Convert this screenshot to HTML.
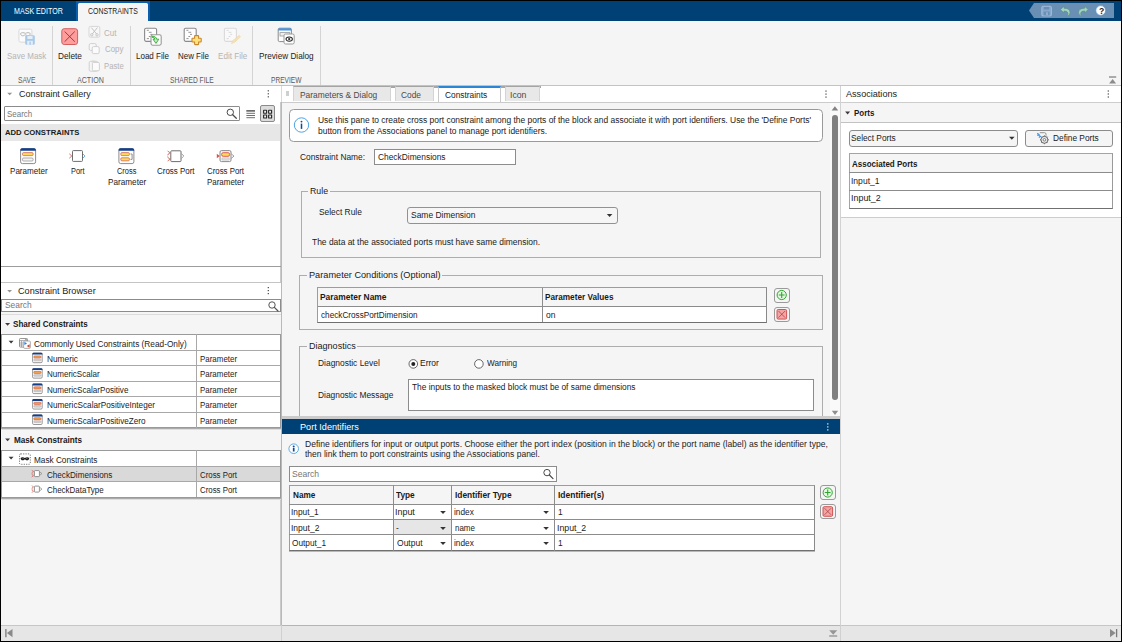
<!DOCTYPE html>
<html><head><meta charset="utf-8"><title>Mask Editor</title>
<style>
html,body{margin:0;padding:0;}
body{width:1122px;height:642px;overflow:hidden;background:#000;font-family:"Liberation Sans",sans-serif;}
#app{position:absolute;left:0;top:0;width:1122px;height:642px;overflow:hidden;background:#000;}
#app div,#app svg{position:absolute;box-sizing:border-box;}
#app .t{white-space:pre;line-height:12px;height:12px;transform-origin:0 0;}
</style></head><body><div id="app">
<div style="left:1px;top:1px;width:1120px;height:640px;background:#f5f5f5;"></div>
<div style="left:1px;top:1px;width:1120px;height:20px;background:#004175;"></div>
<div style="left:75.6px;top:1px;width:74.4px;height:20px;background:#0a5eae;"></div>
<div style="left:78.2px;top:3.4px;width:69.7px;height:17.6px;background:#f5f5f5;border-radius:1.5px 1.5px 0 0;"></div>
<div class="t" style="left:14px;top:6px;font-size:8.2px;color:#fff;transform:scaleX(0.867);">MASK EDITOR</div>
<div class="t" style="left:88px;top:6px;font-size:8.2px;color:#222;transform:scaleX(0.848);">CONSTRAINTS</div>
<svg style="left:1029px;top:3px" width="87" height="17" viewBox="0 0 87 17"><path d="M0 7.5 L5 0 H85 V15 H5 Z" fill="#6a8fb5"/></svg>
<div style="left:52px;top:26px;width:1px;height:59px;background:#d4d4d4;"></div>
<div style="left:130px;top:26px;width:1px;height:59px;background:#d4d4d4;"></div>
<div style="left:252px;top:26px;width:1px;height:59px;background:#d4d4d4;"></div>
<div style="left:320px;top:26px;width:1px;height:59px;background:#d4d4d4;"></div>
<div style="left:1px;top:85px;width:1120px;height:1px;background:#c3c3c3;"></div>
<div class="t" style="left:7px;top:50px;font-size:8.4px;color:#b4b4b4;transform:scaleX(0.948);">Save Mask</div>
<div class="t" style="left:58px;top:50px;font-size:8.4px;color:#222;transform:scaleX(0.988);">Delete</div>
<div class="t" style="left:104px;top:27px;font-size:8.4px;color:#b4b4b4;transform:scaleX(0.954);">Cut</div>
<div class="t" style="left:105px;top:43px;font-size:8.4px;color:#b4b4b4;transform:scaleX(0.943);">Copy</div>
<div class="t" style="left:104px;top:60px;font-size:8.4px;color:#b4b4b4;transform:scaleX(0.919);">Paste</div>
<div class="t" style="left:136px;top:50px;font-size:8.4px;color:#222;transform:scaleX(0.957);">Load File</div>
<div class="t" style="left:178px;top:50px;font-size:8.4px;color:#222;transform:scaleX(0.949);">New File</div>
<div class="t" style="left:218px;top:50px;font-size:8.4px;color:#b4b4b4;transform:scaleX(0.967);">Edit File</div>
<div class="t" style="left:259px;top:50px;font-size:8.4px;color:#222;transform:scaleX(0.979);">Preview Dialog</div>
<div class="t" style="left:18px;top:75px;font-size:8.2px;color:#5a5a5a;transform:scaleX(0.824);">SAVE</div>
<div class="t" style="left:77px;top:75px;font-size:8.2px;color:#5a5a5a;transform:scaleX(0.868);">ACTION</div>
<div class="t" style="left:170px;top:75px;font-size:8.2px;color:#5a5a5a;transform:scaleX(0.813);">SHARED FILE</div>
<div class="t" style="left:271px;top:75px;font-size:8.2px;color:#5a5a5a;transform:scaleX(0.808);">PREVIEW</div>
<div style="left:1px;top:86px;width:280px;height:16px;background:#fff;"></div>
<div style="left:1px;top:101.5px;width:280px;height:1px;background:#c6c6c6;"></div>
<svg style="left:7px;top:92px" width="7" height="4" viewBox="-0.2 -0.7 7 4"><path d="M0 0 H5 L2.5 2.5 Z" fill="#959595"/></svg>
<div class="t" style="left:19px;top:88px;font-size:9.1px;color:#222;transform:scaleX(0.986);">Constraint Gallery</div>
<svg style="left:267px;top:90px" width="3" height="9" viewBox="-0.3 -0.2 3 9"><rect x="0.4" y="0" width="1.2" height="1.2" fill="#444"/><rect x="0.4" y="3" width="1.2" height="1.2" fill="#444"/><rect x="0.4" y="6" width="1.2" height="1.2" fill="#444"/></svg>
<div style="left:1px;top:102px;width:280px;height:180px;background:#fff;"></div>
<div style="left:4px;top:105.8px;width:236px;height:15.6px;background:#fff;border:1px solid #8c8c8c;border-radius:1px;"></div>
<div class="t" style="left:7px;top:108px;font-size:8.4px;color:#767676;transform:scaleX(0.950);">Search</div>
<svg style="left:226px;top:108px" width="12" height="12" viewBox="-0.3 -0.3 12 12"><circle cx="4" cy="4" r="3.2" fill="none" stroke="#4a4a4a" stroke-width="1"/><path d="M6.4 6.4 L10 10" stroke="#4a4a4a" stroke-width="1.25" stroke-linecap="round"/></svg>
<svg style="left:246px;top:110px" width="11" height="10" viewBox="0 0 11 10"><path d="M0.4 1H9M0.4 3.3H9M0.4 5.5H9M0.4 7.7H9" stroke="#555" stroke-width="0.85"/><path d="M0.4 0.8H9" stroke="#555" stroke-width="1.1"/></svg>
<div style="left:260.2px;top:105.2px;width:15px;height:16.8px;background:#dcdcdc;border:1px solid #8a8a8a;border-radius:2px;"></div>
<svg style="left:263px;top:109px" width="11" height="11" viewBox="0 -0.6 11 11"><g fill="#f0f0f0" stroke="#2a2a2a" stroke-width="1.15"><rect x="0.6" y="0.6" width="3" height="3" rx="0.3"/><rect x="5.6" y="0.6" width="3" height="3" rx="0.3"/><rect x="0.6" y="5.4" width="3" height="3" rx="0.3"/><rect x="5.6" y="5.4" width="3" height="3" rx="0.3"/></g></svg>
<div style="left:1px;top:124px;width:280px;height:16.5px;background:#e7e7e7;"></div>
<div class="t" style="left:5px;top:127px;font-size:7.7px;color:#1a1a1a;font-weight:700;">ADD CONSTRAINTS</div>
<div class="t" style="left:10px;top:165px;font-size:8.4px;color:#222;transform:scaleX(0.963);">Parameter</div>
<div class="t" style="left:71px;top:165px;font-size:8.4px;color:#222;transform:scaleX(0.884);">Port</div>
<div class="t" style="left:117px;top:165px;font-size:8.4px;color:#222;transform:scaleX(0.884);">Cross</div>
<div class="t" style="left:108px;top:176px;font-size:8.4px;color:#222;transform:scaleX(0.978);">Parameter</div>
<div class="t" style="left:157px;top:165px;font-size:8.4px;color:#222;transform:scaleX(0.950);">Cross Port</div>
<div class="t" style="left:207px;top:165px;font-size:8.4px;color:#222;transform:scaleX(0.936);">Cross Port</div>
<div class="t" style="left:207px;top:176px;font-size:8.4px;color:#222;transform:scaleX(0.948);">Parameter</div>
<div style="left:281px;top:86px;width:1px;height:16px;background:#d9d9d9;"></div>
<div style="left:280px;top:102px;width:1px;height:523px;background:#cacaca;"></div>
<div style="left:281px;top:102px;width:1px;height:523px;background:#b9b9b9;"></div>
<div style="left:1px;top:266px;width:280px;height:1px;background:#9c9c9c;"></div>
<div style="left:1px;top:282px;width:280px;height:1px;background:#c4c4c4;"></div>
<div style="left:1px;top:283px;width:280px;height:16px;background:#fff;"></div>
<svg style="left:7px;top:290px" width="7" height="4" viewBox="0 0 7 4"><path d="M0.2 0 H5 L2.6 2.5 Z" fill="#959595"/></svg>
<div class="t" style="left:18px;top:285px;font-size:9.1px;color:#222;transform:scaleX(1.005);">Constraint Browser</div>
<svg style="left:267px;top:287px" width="3" height="9" viewBox="-0.3 0 3 9"><rect x="0.4" y="0" width="1.2" height="1.2" fill="#444"/><rect x="0.4" y="3" width="1.2" height="1.2" fill="#444"/><rect x="0.4" y="6" width="1.2" height="1.2" fill="#444"/></svg>
<div style="left:1px;top:299px;width:280px;height:12.6px;background:#fff;border:1px solid #8c8c8c;"></div>
<div class="t" style="left:5px;top:299px;font-size:8.4px;color:#767676;">Search</div>
<svg style="left:268px;top:301px" width="12" height="12" viewBox="0 0 12 12"><circle cx="4" cy="4" r="3.2" fill="none" stroke="#555" stroke-width="1"/><path d="M6.4 6.4 L10 10" stroke="#555" stroke-width="1.25" stroke-linecap="round"/></svg>
<div style="left:1px;top:312px;width:280px;height:22px;background:#f5f5f5;"></div>
<div style="left:1px;top:314px;width:280px;height:1px;background:#dcdcdc;"></div>
<svg style="left:5px;top:322px" width="7" height="5" viewBox="0 -0.6 7 5"><path d="M0.1 0.3 H5.1 L2.6 3.1 Z" fill="#3a3a3a"/></svg>
<div class="t" style="left:13px;top:318px;font-size:8.4px;color:#1a1a1a;font-weight:700;transform:scaleX(0.966);">Shared Constraints</div>
<div style="left:1px;top:334.3px;width:280px;height:94px;background:#fff;"></div>
<svg style="left:8px;top:340px" width="7" height="5" viewBox="-0.5 -0.5 7 5"><path d="M0.1 0.3 H5.1 L2.6 3.1 Z" fill="#3a3a3a"/></svg>
<div class="t" style="left:34px;top:338px;font-size:8.4px;color:#222;transform:scaleX(0.988);">Commonly Used Constraints (Read-Only)</div>
<div class="t" style="left:47px;top:353px;font-size:8.4px;color:#222;transform:scaleX(0.992);">Numeric</div>
<div class="t" style="left:200px;top:353px;font-size:8.4px;color:#222;transform:scaleX(0.948);">Parameter</div>
<div class="t" style="left:47px;top:368px;font-size:8.4px;color:#222;transform:scaleX(0.958);">NumericScalar</div>
<div class="t" style="left:200px;top:368px;font-size:8.4px;color:#222;transform:scaleX(0.948);">Parameter</div>
<div class="t" style="left:47px;top:384px;font-size:8.4px;color:#222;transform:scaleX(0.966);">NumericScalarPositive</div>
<div class="t" style="left:200px;top:384px;font-size:8.4px;color:#222;transform:scaleX(0.948);">Parameter</div>
<div class="t" style="left:47px;top:399px;font-size:8.4px;color:#222;transform:scaleX(0.979);">NumericScalarPositiveInteger</div>
<div class="t" style="left:200px;top:399px;font-size:8.4px;color:#222;transform:scaleX(0.948);">Parameter</div>
<div class="t" style="left:47px;top:415px;font-size:8.4px;color:#222;transform:scaleX(0.970);">NumericScalarPositiveZero</div>
<div class="t" style="left:200px;top:415px;font-size:8.4px;color:#222;transform:scaleX(0.948);">Parameter</div>
<div style="left:1px;top:334px;width:280px;height:1px;background:#9a9a9a;"></div>
<div style="left:1px;top:350px;width:280px;height:1px;background:#a8a8a8;"></div>
<div style="left:1px;top:365px;width:280px;height:1px;background:#a8a8a8;"></div>
<div style="left:1px;top:381px;width:280px;height:1px;background:#a8a8a8;"></div>
<div style="left:1px;top:396px;width:280px;height:1px;background:#a8a8a8;"></div>
<div style="left:1px;top:412px;width:280px;height:1px;background:#a8a8a8;"></div>
<div style="left:1px;top:427px;width:280px;height:1px;background:#9a9a9a;"></div>
<div style="left:1px;top:428px;width:280px;height:1px;background:#ababab;"></div>
<div style="left:1px;top:429px;width:280px;height:1px;background:#dedede;"></div>
<div style="left:196px;top:334.3px;width:1px;height:94px;background:#a8a8a8;"></div>
<div style="left:1px;top:334.3px;width:1px;height:94px;background:#9a9a9a;"></div>
<div style="left:280px;top:334.3px;width:1px;height:94px;background:#9a9a9a;"></div>
<div style="left:1px;top:430px;width:280px;height:21px;background:#f5f5f5;"></div>
<svg style="left:5px;top:438px" width="7" height="5" viewBox="0 -0.2 7 5"><path d="M0.1 0.3 H5.1 L2.6 3.1 Z" fill="#3a3a3a"/></svg>
<div class="t" style="left:14px;top:434px;font-size:8.4px;color:#1a1a1a;font-weight:700;transform:scaleX(0.974);">Mask Constraints</div>
<div style="left:1px;top:450.3px;width:280px;height:47px;background:#fff;"></div>
<svg style="left:8px;top:456px" width="7" height="5" viewBox="-0.5 -0.5 7 5"><path d="M0.1 0.3 H5.1 L2.6 3.1 Z" fill="#3a3a3a"/></svg>
<div class="t" style="left:34px;top:454px;font-size:8.4px;color:#222;transform:scaleX(0.981);">Mask Constraints</div>
<div style="left:2px;top:467px;width:278px;height:15px;background:#d9d9d9;"></div>
<div class="t" style="left:47px;top:469px;font-size:8.4px;color:#222;transform:scaleX(0.968);">CheckDimensions</div>
<div class="t" style="left:200px;top:469px;font-size:8.4px;color:#222;transform:scaleX(0.936);">Cross Port</div>
<div class="t" style="left:47px;top:484px;font-size:8.4px;color:#222;transform:scaleX(0.951);">CheckDataType</div>
<div class="t" style="left:200px;top:484px;font-size:8.4px;color:#222;transform:scaleX(0.936);">Cross Port</div>
<div style="left:1px;top:450px;width:280px;height:1px;background:#9a9a9a;"></div>
<div style="left:1px;top:466px;width:280px;height:1px;background:#a8a8a8;"></div>
<div style="left:1px;top:481px;width:280px;height:1px;background:#a8a8a8;"></div>
<div style="left:1px;top:497px;width:280px;height:1px;background:#9a9a9a;"></div>
<div style="left:1px;top:498px;width:280px;height:1px;background:#ababab;"></div>
<div style="left:1px;top:499px;width:280px;height:1px;background:#dedede;"></div>
<div style="left:196px;top:450.3px;width:1px;height:47px;background:#a8a8a8;"></div>
<div style="left:1px;top:450.3px;width:1px;height:47px;background:#9a9a9a;"></div>
<div style="left:280px;top:450.3px;width:1px;height:47px;background:#9a9a9a;"></div>
<div style="left:1px;top:625px;width:1120px;height:16px;background:#e6e6e6;"></div>
<div style="left:1px;top:625px;width:1120px;height:1px;background:#c6c6c6;"></div>
<svg style="left:5px;top:629px" width="9" height="10" viewBox="-0.3 0 9 10"><path d="M0.6 0 V8.2" stroke="#7a7a7a" stroke-width="1.3"/><path d="M7.2 0 V8.2 L1.6 4.1 Z" fill="#8a8a8a"/></svg>
<svg style="left:1109px;top:629px" width="9" height="10" viewBox="-0.6 0 9 10"><path d="M7 0 V8.2" stroke="#7a7a7a" stroke-width="1.3"/><path d="M0.4 0 V8.2 L6 4.1 Z" fill="#8a8a8a"/></svg>
<div style="left:282px;top:86px;width:558px;height:16px;background:#fff;"></div>
<div style="left:286.2px;top:91.2px;width:2.5px;height:4.5px;background:#cfcfcf;"></div>
<div style="left:282px;top:101.5px;width:558px;height:1px;background:#cbcbcb;"></div>
<div style="left:293px;top:86px;width:146px;height:1.6px;background:#a6a6a6;"></div>
<div style="left:501px;top:86px;width:39.6px;height:1.6px;background:#a6a6a6;"></div>
<div style="left:293px;top:86px;width:98px;height:15.4px;background:#e8e8e8;border-top:1.6px solid #a4a4a4;border-left:1px solid #d4d4d4;border-right:1px solid #d4d4d4;"></div>
<div class="t" style="left:300px;top:89px;font-size:8.4px;color:#4a4a4a;">Parameters &amp; Dialog</div>
<div style="left:395px;top:86px;width:39.39999999999998px;height:15.4px;background:#e8e8e8;border-top:1.6px solid #a4a4a4;border-left:1px solid #d4d4d4;border-right:1px solid #d4d4d4;"></div>
<div class="t" style="left:401px;top:89px;font-size:8.4px;color:#4a4a4a;">Code</div>
<div style="left:438.3px;top:86px;width:62.80000000000001px;height:16.2px;background:#fff;border-top:2px solid #2a86d6;border-left:1px solid #c9c9c9;border-right:1px solid #c9c9c9;"></div>
<div class="t" style="left:445px;top:89px;font-size:8.4px;color:#1a1a1a;transform:scaleX(0.996);">Constraints</div>
<div style="left:504.6px;top:86px;width:35.89999999999998px;height:15.4px;background:#e8e8e8;border-top:1.6px solid #a4a4a4;border-left:1px solid #d4d4d4;border-right:1px solid #d4d4d4;"></div>
<div class="t" style="left:510px;top:89px;font-size:8.4px;color:#4a4a4a;transform:scaleX(1.040);">Icon</div>
<svg style="left:825px;top:90px" width="3" height="9" viewBox="0 -0.5 3 9"><rect x="0.4" y="0" width="1.2" height="1.2" fill="#444"/><rect x="0.4" y="3" width="1.2" height="1.2" fill="#444"/><rect x="0.4" y="6" width="1.2" height="1.2" fill="#444"/></svg>
<div style="left:288.5px;top:109px;width:534.5px;height:32.5px;background:#fff;border:1px solid #9a9a9a;border-radius:4.5px;"></div>
<svg style="left:293px;top:116px" width="18" height="18" viewBox="-0.2 -0.7 18 18"><circle cx="8.3" cy="8.3" r="7.2" fill="#fff" stroke="#4da3e6" stroke-width="1"/><circle cx="8.3" cy="4.9" r="0.95" fill="#0b4a8e"/><rect x="7.55" y="6.9" width="1.5" height="5.3" fill="#0b4a8e"/></svg>
<div class="t" style="left:318px;top:114px;font-size:8.4px;color:#1a1a1a;transform:scaleX(1.007);">Use this pane to create cross port constraint among the ports of the block and associate it with port identifiers. Use the &#x27;Define Ports&#x27;</div>
<div class="t" style="left:318px;top:125px;font-size:8.4px;color:#1a1a1a;transform:scaleX(1.008);">button from the Associations panel to manage port identifiers.</div>
<div class="t" style="left:300px;top:151px;font-size:8.4px;color:#1a1a1a;transform:scaleX(0.998);">Constraint Name:</div>
<div style="left:374px;top:149px;width:141.5px;height:15.5px;background:#fff;border:1px solid #8c8c8c;"></div>
<div class="t" style="left:378px;top:151px;font-size:8.4px;color:#1a1a1a;">CheckDimensions</div>
<div style="left:300.7px;top:191px;width:520.7px;height:66.5px;border:1px solid #adadad;"></div>
<div style="left:308px;top:191px;width:22.19999999999999px;height:1px;background:#f5f5f5;"></div>
<div class="t" style="left:310px;top:185px;font-size:9.1px;color:#1a1a1a;transform:scaleX(0.963);">Rule</div>
<div class="t" style="left:319px;top:206px;font-size:8.4px;color:#1a1a1a;">Select Rule</div>
<div style="left:407px;top:207px;width:211px;height:16.5px;background:#f6f6f6;border:1px solid #929292;border-radius:3px;"></div>
<div class="t" style="left:411px;top:209px;font-size:8.4px;color:#1a1a1a;transform:scaleX(1.009);">Same Dimension</div>
<svg style="left:606px;top:213px" width="7" height="5" viewBox="-0.8 -0.9 7 5"><path d="M0 0.2 H5.6 L2.8 3.2 Z" fill="#333"/></svg>
<div class="t" style="left:312px;top:236px;font-size:8.4px;color:#1a1a1a;transform:scaleX(1.008);">The data at the associated ports must have same dimension.</div>
<div style="left:299px;top:275px;width:524px;height:54.5px;border:1px solid #adadad;"></div>
<div style="left:306.7px;top:275px;width:135.10000000000002px;height:1px;background:#f5f5f5;"></div>
<div class="t" style="left:309px;top:269px;font-size:9.1px;color:#1a1a1a;transform:scaleX(1.009);">Parameter Conditions (Optional)</div>
<div style="left:317.4px;top:287px;width:449.6px;height:35.5px;background:#fff;border:1px solid #8c8c8c;border-color:#9c9c9c #8a8a8a #707070 #9c9c9c;"></div>
<div style="left:318.4px;top:288px;width:447.6px;height:18px;background:#f5f5f5;"></div>
<div style="left:318px;top:306px;width:449px;height:1px;background:#8c8c8c;"></div>
<div style="left:542px;top:288px;width:1px;height:34px;background:#8c8c8c;"></div>
<div class="t" style="left:320px;top:291px;font-size:8.4px;color:#1a1a1a;font-weight:700;transform:scaleX(1.006);">Parameter Name</div>
<div class="t" style="left:545px;top:291px;font-size:8.4px;color:#1a1a1a;font-weight:700;transform:scaleX(0.980);">Parameter Values</div>
<div class="t" style="left:321px;top:309px;font-size:8.4px;color:#222;transform:scaleX(0.978);">checkCrossPortDimension</div>
<div class="t" style="left:546px;top:309px;font-size:8.4px;color:#222;transform:scaleX(1.017);">on</div>
<div style="left:774px;top:287.5px;width:15.5px;height:15px;background:#f5f5f5;border:1px solid #9a9a9a;border-radius:3px;"></div>
<svg style="left:776px;top:289px" width="12" height="12" viewBox="-0.2 -0.5 12 12"><circle cx="5.5" cy="5.5" r="4.6" fill="#e4f6e2" stroke="#2ea82e" stroke-width="1"/><path d="M5.5 2.6V8.4M2.6 5.5H8.4" stroke="#2ea82e" stroke-width="1.1"/></svg>
<div style="left:774px;top:306.8px;width:15.5px;height:15px;background:#f5f5f5;border:1px solid #9a9a9a;border-radius:3px;"></div>
<svg style="left:776px;top:309px" width="12" height="12" viewBox="-0.5 0 12 12"><rect x="0.5" y="0.5" width="9.6" height="9.6" rx="1.2" fill="#f5a3a3" stroke="#c84848" stroke-width="0.9"/><path d="M2 2L8.6 8.6M8.6 2L2 8.6" stroke="#a04040" stroke-width="0.75"/></svg>
<div style="left:299px;top:346px;width:524px;height:71.39999999999998px;border:1px solid #adadad;"></div>
<div style="left:306.7px;top:346px;width:50.80000000000001px;height:1px;background:#f5f5f5;"></div>
<div class="t" style="left:309px;top:340px;font-size:9.1px;color:#1a1a1a;transform:scaleX(0.994);">Diagnostics</div>
<div class="t" style="left:318px;top:357px;font-size:8.4px;color:#1a1a1a;transform:scaleX(1.005);">Diagnostic Level</div>
<svg style="left:408px;top:358px" width="12" height="12" viewBox="0 -0.6 12 12"><circle cx="5.3" cy="5.3" r="4.3" fill="#fff" stroke="#555" stroke-width="0.9"/><circle cx="5.3" cy="5.3" r="2" fill="#222"/></svg>
<div class="t" style="left:420px;top:357px;font-size:8.4px;color:#1a1a1a;transform:scaleX(1.012);">Error</div>
<svg style="left:473px;top:358px" width="12" height="12" viewBox="-0.6 -0.6 12 12"><circle cx="5.3" cy="5.3" r="4.3" fill="#fff" stroke="#555" stroke-width="0.9"/></svg>
<div class="t" style="left:487px;top:357px;font-size:8.4px;color:#1a1a1a;transform:scaleX(0.977);">Warning</div>
<div class="t" style="left:318px;top:389px;font-size:8.4px;color:#1a1a1a;">Diagnostic Message</div>
<div style="left:408px;top:379.3px;width:406px;height:31.4px;background:#fff;border:1px solid #8c8c8c;"></div>
<div class="t" style="left:412px;top:381px;font-size:8.4px;color:#1a1a1a;transform:scaleX(0.994);">The inputs to the masked block must be of same dimensions</div>
<div style="left:830.4px;top:102.5px;width:9.6px;height:315px;background:#fafafa;"></div>
<svg style="left:831px;top:106px" width="9" height="6" viewBox="-0.6 0 9 6"><path d="M0 4.5 L3.3 0.2 L6.6 4.5 Z" fill="#838383"/></svg>
<div style="left:832.1px;top:114.9px;width:5.8px;height:285.4px;background:#808080;border-radius:2.9px;"></div>
<svg style="left:831px;top:410px" width="9" height="6" viewBox="-0.8 -0.5 9 6"><path d="M0 0.2 L3.2 4.5 L6.4 0.2 Z" fill="#8e8e8e"/></svg>
<div style="left:282px;top:416.2px;width:558px;height:2.6px;background:#cbcbcb;"></div>
<div style="left:282px;top:418.7px;width:558px;height:207px;background:#f5f5f5;"></div>
<div style="left:282px;top:418.7px;width:558px;height:15.6px;background:#004175;"></div>
<div class="t" style="left:300px;top:421px;font-size:8.6px;color:#fff;transform:scaleX(1.062);">Port Identifiers</div>
<svg style="left:826px;top:423px" width="3" height="9" viewBox="-0.8 -0.3 3 9"><rect x="0.4" y="0" width="1.2" height="1.2" fill="#fff"/><rect x="0.4" y="3" width="1.2" height="1.2" fill="#fff"/><rect x="0.4" y="6" width="1.2" height="1.2" fill="#fff"/></svg>
<svg style="left:288px;top:443px" width="13" height="13" viewBox="0 0 13 13"><circle cx="5.7" cy="5.7" r="4.8" fill="#fff" stroke="#4da3e6" stroke-width="0.9"/><circle cx="5.7" cy="3.5" r="1" fill="#0b4a8e"/><rect x="4.85" y="5" width="1.7" height="3.5" fill="#0b4a8e"/></svg>
<div class="t" style="left:305px;top:438px;font-size:8.4px;color:#222;transform:scaleX(1.022);">Define identifiers for input or output ports. Choose either the port index (position in the block) or the port name (label) as the identifier type,</div>
<div class="t" style="left:305px;top:448px;font-size:8.4px;color:#222;transform:scaleX(1.015);">then link them to port constraints using the Associations panel.</div>
<div style="left:288.7px;top:466.2px;width:268.3px;height:15.6px;background:#fff;border:1px solid #8c8c8c;"></div>
<div class="t" style="left:292px;top:468px;font-size:8.4px;color:#767676;transform:scaleX(1.021);">Search</div>
<svg style="left:543px;top:468px" width="12" height="12" viewBox="0 -0.6 12 12"><circle cx="4" cy="4" r="3.2" fill="none" stroke="#4a4a4a" stroke-width="1"/><path d="M6.4 6.4 L10 10" stroke="#4a4a4a" stroke-width="1.25" stroke-linecap="round"/></svg>
<div style="left:289px;top:485px;width:526px;height:66px;background:#fff;border:1px solid #8c8c8c;border-color:#9c9c9c #8a8a8a #707070 #9c9c9c;"></div>
<div style="left:290px;top:486px;width:524px;height:18px;background:#f5f5f5;"></div>
<div style="left:394px;top:520px;width:57px;height:14px;background:#e6e6e6;"></div>
<div style="left:289px;top:504px;width:526px;height:1px;background:#8c8c8c;"></div>
<div style="left:289px;top:519px;width:526px;height:1px;background:#8c8c8c;"></div>
<div style="left:289px;top:534px;width:526px;height:1px;background:#8c8c8c;"></div>
<div style="left:289px;top:551px;width:526px;height:1px;background:#b8b8b8;"></div>
<div style="left:393px;top:485px;width:1px;height:66px;background:#8c8c8c;"></div>
<div style="left:451px;top:485px;width:1px;height:66px;background:#8c8c8c;"></div>
<div style="left:554px;top:485px;width:1px;height:66px;background:#8c8c8c;"></div>
<div class="t" style="left:293px;top:489px;font-size:8.4px;color:#1a1a1a;font-weight:700;transform:scaleX(0.981);">Name</div>
<div class="t" style="left:396px;top:489px;font-size:8.4px;color:#1a1a1a;font-weight:700;transform:scaleX(0.990);">Type</div>
<div class="t" style="left:455px;top:489px;font-size:8.4px;color:#1a1a1a;font-weight:700;">Identifier Type</div>
<div class="t" style="left:558px;top:489px;font-size:8.4px;color:#1a1a1a;font-weight:700;transform:scaleX(1.013);">Identifier(s)</div>
<div class="t" style="left:291px;top:506px;font-size:8.4px;color:#222;transform:scaleX(0.991);">Input_1</div>
<div class="t" style="left:395px;top:506px;font-size:8.4px;color:#222;transform:scaleX(1.064);">Input</div>
<div class="t" style="left:454px;top:506px;font-size:8.4px;color:#222;transform:scaleX(0.990);">index</div>
<div class="t" style="left:558px;top:506px;font-size:8.4px;color:#222;">1</div>
<svg style="left:440px;top:510px" width="7" height="5" viewBox="-0.2 -0.7 7 5"><path d="M0 0.2 H5.6 L2.8 3.2 Z" fill="#333"/></svg>
<svg style="left:543px;top:510px" width="7" height="5" viewBox="-0.3 -0.7 7 5"><path d="M0 0.2 H5.6 L2.8 3.2 Z" fill="#333"/></svg>
<div class="t" style="left:291px;top:522px;font-size:8.4px;color:#222;transform:scaleX(1.017);">Input_2</div>
<div class="t" style="left:396px;top:522px;font-size:8.4px;color:#222;">-</div>
<div class="t" style="left:455px;top:522px;font-size:8.4px;color:#222;transform:scaleX(0.952);">name</div>
<div class="t" style="left:557px;top:522px;font-size:8.4px;color:#222;transform:scaleX(1.045);">Input_2</div>
<svg style="left:440px;top:526px" width="7" height="5" viewBox="-0.2 -0.7 7 5"><path d="M0 0.2 H5.6 L2.8 3.2 Z" fill="#333"/></svg>
<svg style="left:543px;top:526px" width="7" height="5" viewBox="-0.3 -0.7 7 5"><path d="M0 0.2 H5.6 L2.8 3.2 Z" fill="#333"/></svg>
<div class="t" style="left:292px;top:537px;font-size:8.4px;color:#222;transform:scaleX(0.987);">Output_1</div>
<div class="t" style="left:397px;top:537px;font-size:8.4px;color:#222;transform:scaleX(1.017);">Output</div>
<div class="t" style="left:454px;top:537px;font-size:8.4px;color:#222;transform:scaleX(0.990);">index</div>
<div class="t" style="left:558px;top:537px;font-size:8.4px;color:#222;">1</div>
<svg style="left:440px;top:541px" width="7" height="5" viewBox="-0.2 -0.7 7 5"><path d="M0 0.2 H5.6 L2.8 3.2 Z" fill="#333"/></svg>
<svg style="left:543px;top:541px" width="7" height="5" viewBox="-0.3 -0.7 7 5"><path d="M0 0.2 H5.6 L2.8 3.2 Z" fill="#333"/></svg>
<div style="left:820px;top:485px;width:15.5px;height:15px;background:#f5f5f5;border:1px solid #9a9a9a;border-radius:3px;"></div>
<svg style="left:822px;top:487px" width="12" height="12" viewBox="-0.2 0 12 12"><circle cx="5.5" cy="5.5" r="4.6" fill="#e4f6e2" stroke="#2ea82e" stroke-width="1"/><path d="M5.5 2.6V8.4M2.6 5.5H8.4" stroke="#2ea82e" stroke-width="1.1"/></svg>
<div style="left:820px;top:504px;width:15.5px;height:15px;background:#f5f5f5;border:1px solid #9a9a9a;border-radius:3px;"></div>
<svg style="left:822px;top:506px" width="12" height="12" viewBox="-0.5 -0.2 12 12"><rect x="0.5" y="0.5" width="9.6" height="9.6" rx="1.2" fill="#f5a3a3" stroke="#c84848" stroke-width="0.9"/><path d="M2 2L8.6 8.6M8.6 2L2 8.6" stroke="#a04040" stroke-width="0.75"/></svg>
<div style="left:840px;top:86px;width:1px;height:555px;background:#d2d2d2;"></div>
<svg style="left:829px;top:630px" width="10" height="9" viewBox="0 0 10 9"><path d="M0.2 0.3 H8.2 L4.2 4.8 Z" fill="#969696"/><path d="M0.2 6H8.2" stroke="#969696" stroke-width="1.4"/></svg>
<div style="left:841px;top:86px;width:280px;height:16px;background:#fff;"></div>
<div style="left:841px;top:102px;width:280px;height:1px;background:#cdcdcd;"></div>
<div class="t" style="left:846px;top:88px;font-size:9.1px;color:#222;">Associations</div>
<svg style="left:1107px;top:90px" width="3" height="9" viewBox="-0.3 -0.4 3 9"><rect x="0.4" y="0" width="1.2" height="1.2" fill="#444"/><rect x="0.4" y="3" width="1.2" height="1.2" fill="#444"/><rect x="0.4" y="6" width="1.2" height="1.2" fill="#444"/></svg>
<div style="left:841px;top:103px;width:280px;height:19px;background:#f5f5f5;"></div>
<div style="left:841px;top:122px;width:280px;height:1px;background:#c2c2c2;"></div>
<svg style="left:845px;top:111px" width="7" height="5" viewBox="0 -0.3 7 5"><path d="M0.1 0.3 H5.1 L2.6 3.1 Z" fill="#3a3a3a"/></svg>
<div class="t" style="left:854px;top:107px;font-size:8.4px;color:#1a1a1a;font-weight:700;transform:scaleX(0.952);">Ports</div>
<div style="left:841px;top:123px;width:280px;height:94px;background:#fff;"></div>
<div style="left:841px;top:217px;width:280px;height:1px;background:#cdcdcd;"></div>
<div style="left:848.5px;top:130px;width:169.2px;height:16.8px;background:#f5f5f5;border:1px solid #8c8c8c;border-radius:3px;"></div>
<div class="t" style="left:851px;top:132px;font-size:8.4px;color:#1a1a1a;transform:scaleX(0.990);">Select Ports</div>
<svg style="left:1009px;top:136px" width="7" height="5" viewBox="0 -0.5 7 5"><path d="M0 0.2 H5.6 L2.8 3.2 Z" fill="#333"/></svg>
<div style="left:1025px;top:130px;width:87.8px;height:16.8px;background:#f5f5f5;border:1px solid #8c8c8c;border-radius:3px;"></div>
<div class="t" style="left:1053px;top:132px;font-size:8.4px;color:#1a1a1a;transform:scaleX(0.993);">Define Ports</div>
<div style="left:848.5px;top:153.3px;width:264.2px;height:56px;background:#fff;border:1px solid #8c8c8c;border-color:#a4a4a4 #9a9a9a #707070 #a4a4a4;"></div>
<div style="left:849.5px;top:154.3px;width:262.2px;height:18px;background:#f5f5f5;"></div>
<div style="left:848.5px;top:172px;width:264.2px;height:1px;background:#8c8c8c;"></div>
<div style="left:848.5px;top:190px;width:264.2px;height:1px;background:#8c8c8c;"></div>
<div class="t" style="left:852px;top:158px;font-size:8.4px;color:#1a1a1a;font-weight:700;transform:scaleX(0.957);">Associated Ports</div>
<div class="t" style="left:851px;top:175px;font-size:8.4px;color:#222;transform:scaleX(1.020);">Input_1</div>
<div class="t" style="left:851px;top:192px;font-size:8.4px;color:#222;transform:scaleX(1.065);">Input_2</div>
<svg style="left:1108px;top:76px" width="9" height="9" viewBox="-0.8 -0.2 9 9"><path d="M0.2 0.8H7.4" stroke="#8c8c8c" stroke-width="1.4"/><path d="M0.3 7.2 L3.8 2.8 L7.3 7.2 Z" fill="#8c8c8c"/></svg>
<svg style="left:18px;top:28px" width="19" height="19" viewBox="0 -0.2 19 19"><rect x="0.9" y="0.9" width="13" height="13" rx="1.6" fill="#fbfbfb" stroke="#d9d9d9" stroke-width="1"/>
<path d="M2.6 5.2 C3.6 4.2 5.6 4.2 7.4 5.2 C9.2 4.2 11.2 4.2 12.2 5.2 C12.2 7.2 10.8 7.8 9.6 7.6 C8.6 7.4 8 6.6 7.4 6.6 C6.8 6.6 6.2 7.4 5.2 7.6 C4 7.8 2.6 7.2 2.6 5.2Z" fill="none" stroke="#b5b5b5" stroke-width="1"/>
<rect x="7.2" y="7" width="9.6" height="9.6" rx="1.4" fill="#a9c9e8"/>
<rect x="9.4" y="7.8" width="5.2" height="3" fill="#e4eef8"/><rect x="9.2" y="12.6" width="5.6" height="4" fill="#e4eef8"/><rect x="11.4" y="13.4" width="1.4" height="3.2" fill="#a9c9e8"/></svg>
<svg style="left:60px;top:27px" width="19" height="19" viewBox="-0.8 -0.7 19 19"><rect x="1" y="1" width="15.8" height="15.8" rx="2.4" fill="#ff9d9d" stroke="#d06060" stroke-width="1"/>
<path d="M3.8 3.8 L14 14 M14 3.8 L3.8 14" stroke="#8a3434" stroke-width="0.9"/></svg>
<svg style="left:88px;top:25px" width="13" height="13" viewBox="-0.4 -0.8 13 13"><rect x="0.6" y="0.6" width="10.8" height="10.8" rx="1.4" fill="#f8f8f8" stroke="#d6d6d6" stroke-width="1"/>
<path d="M3 1.8 L8 8 M9 1.8 L4 8" stroke="#bcbcbc" stroke-width="0.9"/><circle cx="3.4" cy="9" r="1.2" fill="none" stroke="#bcbcbc" stroke-width="0.8"/><circle cx="8.6" cy="9" r="1.2" fill="none" stroke="#bcbcbc" stroke-width="0.8"/></svg>
<svg style="left:88px;top:43px" width="13" height="13" viewBox="-0.6 0 13 13"><rect x="0.6" y="0.6" width="7" height="6.8" rx="1.4" fill="#f8f8f8" stroke="#d0d0d0" stroke-width="1"/>
<rect x="3.6" y="3.6" width="7" height="7" rx="1.4" fill="#fbfbfb" stroke="#d0d0d0" stroke-width="1"/></svg>
<svg style="left:88px;top:60px" width="13" height="13" viewBox="-0.6 -0.2 13 13"><rect x="0.6" y="1.2" width="8.6" height="9.8" rx="1.4" fill="#f6f6f6" stroke="#d0d0d0" stroke-width="1"/><rect x="3" y="0.4" width="3.8" height="1.8" rx="0.6" fill="#d8d8d8"/>
<rect x="3.8" y="2.2" width="7" height="8.4" rx="1.2" fill="#fbfbfb" stroke="#d0d0d0" stroke-width="1"/></svg>
<svg style="left:144px;top:27px" width="19" height="19.4" viewBox="0 -0.6 19 19.4"><rect x="0.6" y="0.6" width="12" height="13.2" rx="1.6" fill="#fdfdfd" stroke="#8a8a8a" stroke-width="1.1"/>
<path d="M2.8 2.7H4.8 M4.8 4.7H7.6 M6.4 6.8H8.4 M4.8 8.9H6.6 M2.8 11H5" stroke="#8a8a8a" stroke-width="0.9"/><rect x="7" y="7.2" width="10.2" height="10.4" rx="1.6" fill="#fdfdfd" stroke="#9a9a9a" stroke-width="1.1"/>
<path d="M8 8.6 Q12.4 8.8 12.6 11.6 H14.8 L12 15.8 L9 11.6 H11 Q10.8 10 8 9.6Z" fill="#c4ecc4" stroke="#36a836" stroke-width="0.9" stroke-linejoin="round"/></svg>
<svg style="left:183px;top:27px" width="20" height="20" viewBox="-0.6 -0.6 20 20"><rect x="0.6" y="0.6" width="12" height="13.2" rx="1.6" fill="#fdfdfd" stroke="#8a8a8a" stroke-width="1.1"/>
<path d="M2.8 2.7H4.8 M4.8 4.7H7.6 M6.4 6.8H8.4 M4.8 8.9H6.6 M2.8 11H5" stroke="#8a8a8a" stroke-width="0.9"/><path d="M11.6 8 H14.4 Q15 8 15 8.6 V10.6 H17 Q17.6 10.6 17.6 11.2 V13.8 Q17.6 14.4 17 14.4 H15 V16.4 Q15 17 14.4 17 H11.6 Q11 17 11 16.4 V14.4 H9 Q8.4 14.4 8.4 13.8 V11.2 Q8.4 10.6 9 10.6 H11 V8.6 Q11 8 11.6 8Z" fill="#ffe27c" stroke="#c8862c" stroke-width="1.1"/></svg>
<svg style="left:223px;top:27px" width="19" height="19" viewBox="-0.8 -0.6 19 19"><rect x="0.6" y="0.6" width="12" height="13.2" rx="1.6" fill="#f9f9f9" stroke="#dadada" stroke-width="1.1"/>
<path d="M2.8 2.7H4.8 M4.8 4.7H7.6 M6.4 6.8H8.4 M4.8 8.9H6.6 M2.8 11H5" stroke="#d6d6d6" stroke-width="0.9"/><path d="M7.6 16 L9 13 L15.4 7.6 L16.8 9.2 L10.4 15 Z" fill="#f3e0b4" stroke="#ecd6a4" stroke-width="0.5"/></svg>
<svg style="left:277px;top:27px" width="19" height="19" viewBox="-0.6 -0.6 19 19"><rect x="0.6" y="0.6" width="13.2" height="13.4" rx="1.4" fill="#fdfdfd" stroke="#8a8a8a" stroke-width="1"/>
<path d="M0.6 3 V2 Q0.6 0.6 2 0.6 H12.4 Q13.8 0.6 13.8 2 V3Z" fill="#4b93dd"/>
<rect x="2.4" y="5" width="9.8" height="3.4" fill="#f0f0f0" stroke="#9a9a9a" stroke-width="0.8"/>
<rect x="6.4" y="6.4" width="10.2" height="10" rx="1.6" fill="#fdfdfd" stroke="#9a9a9a" stroke-width="1"/>
<ellipse cx="11.6" cy="11.5" rx="3.2" ry="2.1" fill="#fff" stroke="#2a2a2a" stroke-width="1.05"/><circle cx="11.6" cy="11.5" r="1.15" fill="#333"/></svg>
<svg style="left:1036px;top:131px" width="14" height="14" viewBox="-0.6 -0.8 14 14"><path d="M0.6 1.4 L2.4 2.6 L0.6 3.8 M2.2 3.4 L4 4.6 L2.2 5.8" stroke="#4a98e6" stroke-width="1.2" fill="none"/>
<path d="M3.2 0.9 H8 Q9.4 0.9 9.4 2.3 V4" fill="none" stroke="#8a8a8a" stroke-width="0.9"/>
<circle cx="7.8" cy="8" r="3.5" fill="#e9e9e9" stroke="#6a6a6a" stroke-width="1"/><circle cx="7.8" cy="8" r="1.3" fill="#f8f8f8" stroke="#6a6a6a" stroke-width="0.8"/>
<path d="M7.8 3.6V4.6M7.8 11.4V12.4M3.4 8H4.4M11.2 8H12.2M4.7 4.9L5.4 5.6M10.2 10.4L10.9 11.1M10.9 4.9L10.2 5.6M4.7 11.1L5.4 10.4" stroke="#6a6a6a" stroke-width="1"/></svg>
<svg style="left:20px;top:148px" width="18" height="18" viewBox="0 0 18 18"><rect x="0.6" y="0.6" width="15" height="15" rx="1.8" fill="#fdfdfd" stroke="#8c8c8c" stroke-width="1"/>
<path d="M0.3 2.8 V2 Q0.3 0.2 2 0.2 H14.2 Q15.9 0.2 15.9 2 V2.8Z" fill="#123f8c"/><rect x="2.5" y="4.6" width="10.6" height="3" rx="1.1" fill="#ffdc5e" stroke="#d2584a" stroke-width="0.7"/><rect x="2.5" y="10" width="10.6" height="3" rx="1.1" fill="#f4f4f4" stroke="#8c8c8c" stroke-width="0.7"/></svg>
<svg style="left:118px;top:148px" width="18" height="18" viewBox="-0.3 0 18 18"><rect x="0.6" y="0.6" width="15" height="15" rx="1.8" fill="#fdfdfd" stroke="#8c8c8c" stroke-width="1"/>
<path d="M0.3 2.8 V2 Q0.3 0.2 2 0.2 H14.2 Q15.9 0.2 15.9 2 V2.8Z" fill="#123f8c"/><rect x="2.5" y="4.6" width="8.6" height="3" rx="1.1" fill="#ffdc5e" stroke="#d2584a" stroke-width="0.7"/><rect x="2.5" y="9.8" width="8.6" height="3" rx="1.1" fill="#ffdc5e" stroke="#d2584a" stroke-width="0.7"/><path d="M12.2 6 H13.8 V11.4 H12.2" fill="none" stroke="#777" stroke-width="0.8"/></svg>
<svg style="left:68px;top:149px" width="19" height="15" viewBox="-0.6 -0.4 19 15"><rect x="3.9" y="1.2" width="10" height="10.8" rx="0.8" fill="#fff" stroke="#6e6e6e" stroke-width="1"/>
<path d="M0.7 4.4 L3.2 6.6 L0.7 8.8" fill="none" stroke="#d0524a" stroke-width="0.8"/><path d="M14.2 4.4 L16.4 6.6 L14.2 8.8" fill="none" stroke="#4a9be8" stroke-width="0.8"/></svg>
<svg style="left:166px;top:149px" width="19" height="15" viewBox="-0.6 -0.4 19 15"><rect x="4.2" y="1.4" width="10.2" height="10.8" rx="0.8" fill="#fff" stroke="#6e6e6e" stroke-width="1"/>
<path d="M1 1.6 L3.6 3.4 L1 5.2 M1 8 L3.6 9.8 L1 11.6" fill="none" stroke="#d0524a" stroke-width="0.8"/><path d="M1.8 5 Q0.4 6.6 1.8 8.2" fill="none" stroke="#d0524a" stroke-width="0.7" stroke-dasharray="0.8 0.8"/>
<path d="M14.8 4.2 L17.2 6.6 L14.8 9" fill="none" stroke="#888" stroke-width="0.8"/></svg>
<svg style="left:216px;top:149px" width="20" height="14" viewBox="0 -0.8 20 14"><rect x="4" y="0.8" width="11" height="11" rx="1.4" fill="#f3f3f3" stroke="#8c8c8c" stroke-width="1"/>
<rect x="5.6" y="2.9" width="8" height="3.6" rx="1.6" fill="#ffd95a" stroke="#e0504a" stroke-width="0.9"/>
<rect x="5.8" y="8.2" width="7.6" height="2" rx="1" fill="#e8e8e8" stroke="#b5b5b5" stroke-width="0.6"/>
<path d="M0.8 4 L3.8 6.2 L0.8 8.4Z" fill="#e0504a"/><path d="M15.2 4 L18 6.3 L15.2 8.6" fill="none" stroke="#888" stroke-width="0.8"/></svg>
<svg style="left:19px;top:338px" width="13" height="12" viewBox="0 0 13 12"><rect x="0.5" y="0.5" width="8" height="8.6" rx="0.8" fill="#fcfcfc" stroke="#8a8a8a" stroke-width="0.9"/>
<path d="M0.5 2.6H8.5M0.5 5H4M0.5 7H4M2.6 2.6V9" stroke="#8a8a8a" stroke-width="0.7"/><path d="M6 1.5H8" stroke="#5bb870" stroke-width="0.8"/>
<rect x="4.6" y="3" width="6.8" height="7.4" rx="1" fill="#fcfcfc" stroke="#9a9a9a" stroke-width="0.8"/>
<path d="M5.4 3.8 L8 5.4 L5.4 7Z" fill="#2e7fe0"/><path d="M10.6 6.2 L7.8 8 L10.6 9.8Z" fill="#d6402e"/></svg>
<svg style="left:32px;top:352px" width="12" height="12" viewBox="-0.1 -0.6 12 12"><rect x="0.5" y="0.5" width="9.6" height="9.6" rx="1.2" fill="#fbfbfb" stroke="#8c8c8c" stroke-width="0.9"/>
<path d="M0.2 2 V1.4 Q0.2 0.1 1.5 0.1 H9.1 Q10.4 0.1 10.4 1.4 V2Z" fill="#123f8c"/>
<rect x="1.7" y="3.3" width="7.2" height="2.2" rx="1" fill="#f0a050" stroke="#d05a4a" stroke-width="0.6"/>
<rect x="1.7" y="6.6" width="7.2" height="1.6" rx="0.8" fill="#d8d8d8" stroke="#a0a0a0" stroke-width="0.5"/></svg>
<svg style="left:32px;top:368px" width="12" height="12" viewBox="-0.1 -0.05 12 12"><rect x="0.5" y="0.5" width="9.6" height="9.6" rx="1.2" fill="#fbfbfb" stroke="#8c8c8c" stroke-width="0.9"/>
<path d="M0.2 2 V1.4 Q0.2 0.1 1.5 0.1 H9.1 Q10.4 0.1 10.4 1.4 V2Z" fill="#123f8c"/>
<rect x="1.7" y="3.3" width="7.2" height="2.2" rx="1" fill="#f0a050" stroke="#d05a4a" stroke-width="0.6"/>
<rect x="1.7" y="6.6" width="7.2" height="1.6" rx="0.8" fill="#d8d8d8" stroke="#a0a0a0" stroke-width="0.5"/></svg>
<svg style="left:32px;top:383px" width="12" height="12" viewBox="-0.1 -0.5 12 12"><rect x="0.5" y="0.5" width="9.6" height="9.6" rx="1.2" fill="#fbfbfb" stroke="#8c8c8c" stroke-width="0.9"/>
<path d="M0.2 2 V1.4 Q0.2 0.1 1.5 0.1 H9.1 Q10.4 0.1 10.4 1.4 V2Z" fill="#123f8c"/>
<rect x="1.7" y="3.3" width="7.2" height="2.2" rx="1" fill="#f0a050" stroke="#d05a4a" stroke-width="0.6"/>
<rect x="1.7" y="6.6" width="7.2" height="1.6" rx="0.8" fill="#d8d8d8" stroke="#a0a0a0" stroke-width="0.5"/></svg>
<svg style="left:32px;top:398px" width="12" height="12" viewBox="-0.1 -0.95 12 12"><rect x="0.5" y="0.5" width="9.6" height="9.6" rx="1.2" fill="#fbfbfb" stroke="#8c8c8c" stroke-width="0.9"/>
<path d="M0.2 2 V1.4 Q0.2 0.1 1.5 0.1 H9.1 Q10.4 0.1 10.4 1.4 V2Z" fill="#123f8c"/>
<rect x="1.7" y="3.3" width="7.2" height="2.2" rx="1" fill="#f0a050" stroke="#d05a4a" stroke-width="0.6"/>
<rect x="1.7" y="6.6" width="7.2" height="1.6" rx="0.8" fill="#d8d8d8" stroke="#a0a0a0" stroke-width="0.5"/></svg>
<svg style="left:32px;top:414px" width="12" height="12" viewBox="-0.1 -0.4 12 12"><rect x="0.5" y="0.5" width="9.6" height="9.6" rx="1.2" fill="#fbfbfb" stroke="#8c8c8c" stroke-width="0.9"/>
<path d="M0.2 2 V1.4 Q0.2 0.1 1.5 0.1 H9.1 Q10.4 0.1 10.4 1.4 V2Z" fill="#123f8c"/>
<rect x="1.7" y="3.3" width="7.2" height="2.2" rx="1" fill="#f0a050" stroke="#d05a4a" stroke-width="0.6"/>
<rect x="1.7" y="6.6" width="7.2" height="1.6" rx="0.8" fill="#d8d8d8" stroke="#a0a0a0" stroke-width="0.5"/></svg>
<svg style="left:19px;top:453px" width="13" height="13" viewBox="0 -0.4 13 13"><rect x="0.5" y="0.5" width="10.8" height="10.4" rx="1.2" fill="#fff" stroke="#555" stroke-width="0.8" stroke-dasharray="1.2 1.2"/>
<path d="M1.6 4.6 C2.6 3.6 4.6 3.6 5.9 4.6 C7.2 3.6 9.2 3.6 10.2 4.6 C10.2 6.6 8.8 7.1 7.8 6.9 C6.9 6.7 6.4 6 5.9 6 C5.4 6 4.9 6.7 4 6.9 C3 7.1 1.6 6.6 1.6 4.6Z M3 5.2 Q3.9 4.7 4.8 5.4 Q3.9 6 3 5.2Z M7 5.4 Q7.9 4.7 8.8 5.2 Q7.9 6 7 5.4Z" fill="#1a1a1a" fill-rule="evenodd"/></svg>
<svg style="left:31px;top:469px" width="13" height="9" viewBox="-0.2 -0.8 13 9"><rect x="3.2" y="0.8" width="5" height="6" rx="0.8" fill="#fff" stroke="#777" stroke-width="0.8"/>
<path d="M0.5 0.4 L2.4 1.6 L0.5 2.8 M0.5 4.8 L2.4 6 L0.5 7.2" fill="none" stroke="#d0524a" stroke-width="0.6"/><path d="M1.3 2.8 Q0.5 3.8 1.3 4.8" fill="none" stroke="#d0524a" stroke-width="0.5"/>
<path d="M8.4 2 L10.8 3.8 L8.4 5.6" fill="none" stroke="#888" stroke-width="0.7"/></svg>
<svg style="left:31px;top:485px" width="13" height="9" viewBox="-0.2 -0.3 13 9"><rect x="3.2" y="0.8" width="5" height="6" rx="0.8" fill="#fff" stroke="#777" stroke-width="0.8"/>
<path d="M0.5 0.4 L2.4 1.6 L0.5 2.8 M0.5 4.8 L2.4 6 L0.5 7.2" fill="none" stroke="#d0524a" stroke-width="0.6"/><path d="M1.3 2.8 Q0.5 3.8 1.3 4.8" fill="none" stroke="#d0524a" stroke-width="0.5"/>
<path d="M8.4 2 L10.8 3.8 L8.4 5.6" fill="none" stroke="#888" stroke-width="0.7"/></svg>
<svg style="left:1041px;top:5px" width="13" height="13" viewBox="0 -0.5 13 13"><rect x="0.8" y="0.8" width="9.6" height="9.6" rx="1" fill="#86a8cc" stroke="#a9c0dc" stroke-width="0.9"/><rect x="2.8" y="1.4" width="5.4" height="2.6" fill="#6a8fb5"/><rect x="2.6" y="6" width="6" height="4" fill="#6a8fb5"/><rect x="5.4" y="6.8" width="1.2" height="2.8" fill="#a9c0dc"/></svg>
<svg style="left:1059px;top:5px" width="14" height="14" viewBox="-0.5 0 14 14"><path d="M0.8 4.6 L4.6 1.2 V3.2 Q10.6 3.2 10.6 7.6 Q10.6 10.6 7 11.6 Q8.6 10 8.4 8.2 Q8 6 4.6 6 V8 Z" fill="#9fd3bc" stroke="#5a8a8e" stroke-width="0.7" stroke-linejoin="round"/></svg>
<svg style="left:1076px;top:5px" width="14" height="14" viewBox="-0.5 0 14 14"><path d="M11.8 4.6 L8 1.2 V3.2 Q2 3.2 2 7.6 Q2 10.6 5.6 11.6 Q4 10 4.2 8.2 Q4.6 6 8 6 V8 Z" fill="#9fd3bc" stroke="#5a8a8e" stroke-width="0.7" stroke-linejoin="round"/></svg>
<svg style="left:1095px;top:4px" width="14" height="14" viewBox="0 -0.5 14 14"><circle cx="5.7" cy="6" r="4.9" fill="#fff" stroke="#4a90d9" stroke-width="0.7"/></svg>
<div class="t" style="left:1099px;top:5px;font-size:8.6px;color:#222;font-weight:700;">?</div>
<div style="left:281px;top:625px;width:1px;height:16px;background:#d0d0d0;"></div>
<div style="left:840px;top:625px;width:1px;height:16px;background:#d0d0d0;"></div>
<div style="left:282px;top:624.6px;width:558px;height:1px;background:#b4b4b4;"></div>
</div></body></html>
